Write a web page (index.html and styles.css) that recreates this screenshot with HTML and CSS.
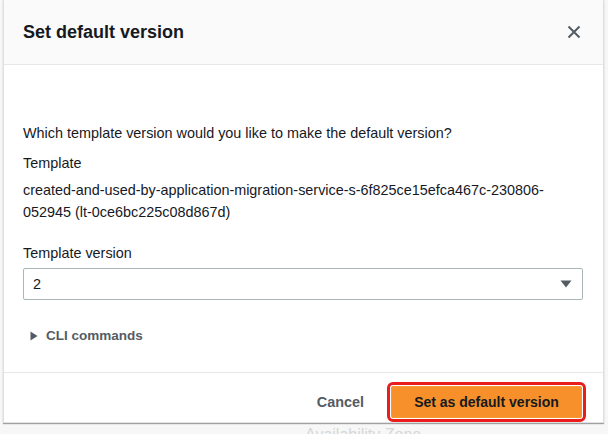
FILE: index.html
```html
<!DOCTYPE html>
<html>
<head>
<meta charset="utf-8">
<link rel="stylesheet" href="styles.css">
</head>
<body>
<div class="backdrop-text">Availability Zone</div>
<div class="modal">
  <div class="modal-header">
    <h2 class="modal-title">Set default version</h2>
    <button class="close-btn" aria-label="Close">
      <svg width="14" height="14" viewBox="0 0 14 14"><path d="M1.5 1.5L12.5 12.5M12.5 1.5L1.5 12.5" stroke="#545b64" stroke-width="2" fill="none"/></svg>
    </button>
  </div>
  <div class="modal-body">
    <p class="question">Which template version would you like to make the default version?</p>
    <div class="field">
      <div class="field-label">Template</div>
      <div class="field-value">created-and-used-by-application-migration-service-s-6f825ce15efca467c-230806-052945 (lt-0ce6bc225c08d867d)</div>
    </div>
    <div class="field field-version">
      <div class="field-label">Template version</div>
      <div class="select">
        <span>2</span>
        <svg width="12" height="8" viewBox="0 0 12 8"><path d="M0.5 0.5H11.5L6 7.5Z" fill="#545b64"/></svg>
      </div>
    </div>
    <div class="expander">
      <svg width="8" height="10" viewBox="0 0 8 10"><path d="M0.5 0.5L7.5 5L0.5 9.5Z" fill="#545b64"/></svg>
      <span>CLI commands</span>
    </div>
  </div>
  <div class="modal-footer">
    <button class="btn-link">Cancel</button>
    <button class="btn-primary">Set as default version</button>
  </div>
</div>
</body>
</html>
```

FILE: styles.css
```css
html, body {
  margin: 0;
  padding: 0;
}
body {
  width: 608px;
  height: 434px;
  overflow: hidden;
  background: #f7f7f7;
  font-family: "Liberation Sans", Arial, sans-serif;
  color: #16191f;
  position: relative;
}
.backdrop-text {
  position: absolute;
  left: 305px;
  top: 426px;
  font-size: 16px;
  line-height: 18px;
  color: #d5d7d9;
}
.modal {
  position: relative;
  margin-left: 3px;
  width: 599px;
  height: 422px;
  background: #fff;
  border: 1px solid #dfe1e2;
  border-top: none;
  box-shadow: 0 1px 1px rgba(0,0,0,0.35);
  display: flex;
  flex-direction: column;
}
.modal-header {
  height: 65px;
  background: #fafafa;
  border-bottom: 1px solid #e6e8e8;
  display: flex;
  align-items: center;
  justify-content: space-between;
  padding: 0 22px 0 19px;
  box-sizing: border-box;
  flex: none;
}
.modal-title {
  margin: 0;
  font-size: 18px;
  font-weight: bold;
  color: #16191f;
}
.close-btn {
  border: none;
  background: none;
  padding: 0;
  width: 14px;
  height: 14px;
  display: flex;
}
.modal-body {
  padding: 57px 20px 0 19px;
  flex: 1;
  border-bottom: 1px solid #e6e8e8;
  font-size: 14.4px;
  line-height: 22px;
}
.question {
  margin: 0;
}
.field {
  margin-top: 8px;
}
.field-label {
  line-height: 22px;
}
.field-value {
  margin-top: 5px;
  line-height: 22px;
}
.field-version {
  margin-top: 19px;
}
.select {
  margin-top: 4px;
  height: 30px;
  border: 1px solid #aab7b8;
  border-radius: 2px;
  display: flex;
  align-items: center;
  justify-content: space-between;
  padding: 0 10px 0 9px;
}
.expander {
  margin-top: 25px;
  display: flex;
  align-items: center;
  gap: 8px;
  padding-left: 7px;
  font-size: 13.5px;
  font-weight: bold;
  color: #545b64;
}
.modal-footer {
  height: 49px;
  flex: none;
  display: flex;
  align-items: center;
  justify-content: flex-end;
  padding: 8px 21px 0 0;
  box-sizing: border-box;
  gap: 27px;
}
.btn-link {
  border: none;
  background: none;
  font-family: inherit;
  font-size: 14.4px;
  font-weight: bold;
  color: #545b64;
  padding: 0;
}
.btn-primary {
  height: 32px;
  width: 191px;
  border: 1px solid #f59a2f;
  border-radius: 2px;
  background: #f7902a;
  font-family: inherit;
  font-size: 14px;
  font-weight: bold;
  color: #16191f;
  outline: 3px solid #ea1d1d;
  outline-offset: 1px;
}
```
